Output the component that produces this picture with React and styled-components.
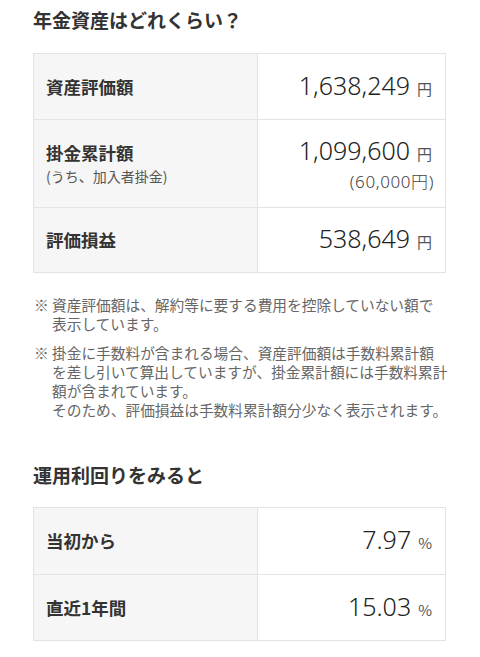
import React from 'react';
import styled, { createGlobalStyle } from 'styled-components';

const GlobalStyle = createGlobalStyle`
  html, body {
    margin: 0;
    padding: 0;
    background: #fff;
  }
  body {
    font-family: "Noto Sans", "Noto Sans CJK JP", sans-serif;
    color: #333;
    -webkit-font-smoothing: antialiased;
  }
`;

const Page = styled.div`
  width: 480px;
  box-sizing: border-box;
  padding: 0 34px 20px 33px;
`;

const Heading = styled.h2`
  margin: ${props => props.top}px 0 0;
  font-family: "Noto Sans CJK JP", sans-serif;
  font-size: 19px;
  line-height: 27px;
  font-weight: 700;
  color: #333;
`;

const Table = styled.div`
  margin-top: ${props => props.top}px;
  border: 1px solid #e3e3e3;
`;

const Row = styled.div`
  display: grid;
  grid-template-columns: 224px 1fr;
  min-height: ${props => props.height}px;
  & + & {
    border-top: 1px solid #e3e3e3;
  }
`;

const LabelCell = styled.div`
  display: flex;
  flex-direction: column;
  justify-content: center;
  padding: 0 12px;
  background: #f6f6f6;
  border-right: 1px solid #e3e3e3;
`;

const Label = styled.div`
  font-family: "Noto Sans CJK JP", sans-serif;
  font-size: 17.5px;
  line-height: 24px;
  font-weight: 700;
  color: #333;
`;

const SubLabel = styled.div`
  font-family: "Noto Sans CJK JP", sans-serif;
  font-size: 14px;
  line-height: 22px;
  color: #555;
`;

const ValueCell = styled.div`
  display: flex;
  flex-direction: column;
  justify-content: center;
  align-items: flex-end;
  padding: 0 13px 0 12px;
`;

const Value = styled.div`
  font-family: "Noto Sans", "Noto Sans CJK JP", sans-serif;
  font-size: 25px;
  line-height: 30px;
  font-weight: 300;
  color: #222;
  white-space: nowrap;
`;

const Unit = styled.span`
  margin-left: 7px;
  font-family: "Noto Sans CJK JP", sans-serif;
  font-size: 15px;
  font-weight: 400;
  color: #555;
`;

const SubValue = styled.div`
  margin-top: 1px;
  margin-right: -2px;
  font-family: "Noto Sans", "Noto Sans CJK JP", sans-serif;
  font-size: 17px;
  line-height: 23px;
  letter-spacing: 0.6px;
  font-weight: 300;
  color: #444;
  white-space: nowrap;
`;

const Notes = styled.div`
  margin-top: 22px;
  display: flex;
  flex-direction: column;
  gap: 10px;
`;

const Note = styled.div`
  display: flex;
  font-family: "Noto Sans CJK JP", sans-serif;
  font-size: 14.7px;
  line-height: 19px;
  color: #666;
`;

const Mark = styled.span`
  flex: 0 0 18px;
  padding-left: 1px;
`;

const NoteText = styled.div`
  flex: 1;
  white-space: nowrap;
`;

const assetRows = [
  { label: '資産評価額', value: '1,638,249', height: 65 },
  { label: '掛金累計額', sub: '(うち、加入者掛金)', value: '1,099,600', subValue: '(60,000円)', height: 87 },
  { label: '評価損益', value: '538,649', height: 64 },
];

const yieldRows = [
  { label: '当初から', value: '7.97', height: 66 },
  { label: '直近1年間', value: '15.03', height: 65 },
];

function DataTable({ rows, unit, top }) {
  return (
    <Table top={top}>
      {rows.map(row => (
        <Row key={row.label} height={row.height}>
          <LabelCell>
            <Label>{row.label}</Label>
            {row.sub && <SubLabel>{row.sub}</SubLabel>}
          </LabelCell>
          <ValueCell>
            <Value>
              {row.value}
              <Unit>{unit}</Unit>
            </Value>
            {row.subValue && <SubValue>{row.subValue}</SubValue>}
          </ValueCell>
        </Row>
      ))}
    </Table>
  );
}

export default function App() {
  return (
    <Page>
      <GlobalStyle />
      <Heading top={6}>年金資産はどれくらい？</Heading>
      <DataTable rows={assetRows} unit="円" top={20} />

      <Notes>
        <Note>
          <Mark>※</Mark>
          <NoteText>
            資産評価額は、解約等に要する費用を控除していない額で
            <br />
            表示しています。
          </NoteText>
        </Note>
        <Note>
          <Mark>※</Mark>
          <NoteText>
            掛金に手数料が含まれる場合、資産評価額は手数料累計額
            <br />
            を差し引いて算出していますが、掛金累計額には手数料累計
            <br />
            額が含まれています。
            <br />
            そのため、評価損益は手数料累計額分少なく表示されます。
          </NoteText>
        </Note>
      </Notes>

      <Heading top={42}>運用利回りをみると</Heading>
      <DataTable rows={yieldRows} unit="%" top={19} />
    </Page>
  );
}
